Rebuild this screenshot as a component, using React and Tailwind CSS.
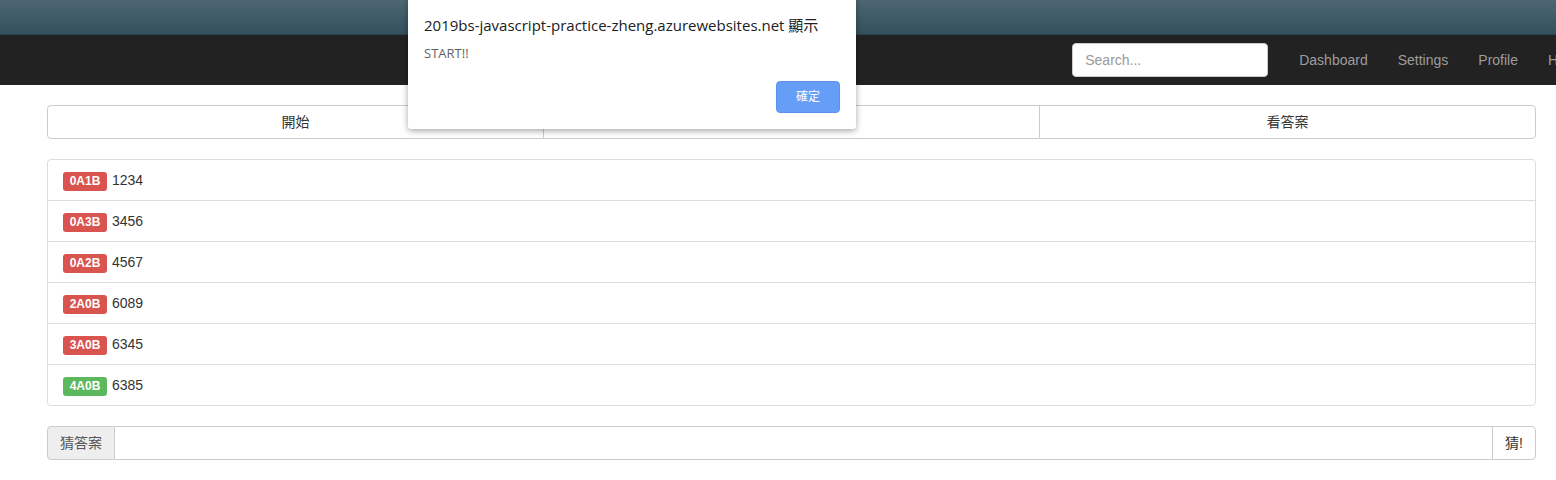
import React from "react";

const guesses = [
  { hint: "0A1B", value: "1234", ok: false },
  { hint: "0A3B", value: "3456", ok: false },
  { hint: "0A2B", value: "4567", ok: false },
  { hint: "2A0B", value: "6089", ok: false },
  { hint: "3A0B", value: "6345", ok: false },
  { hint: "4A0B", value: "6385", ok: true },
];

const sans = { fontFamily: '"Liberation Sans", Arial, "Noto Sans CJK TC", sans-serif' };

export default function App() {
  return (
    <div className="relative w-[1556px] h-[480px] bg-white overflow-hidden text-[14px] text-[#333]" style={sans}>
      {/* top strip */}
      <div className="h-[35px] bg-gradient-to-b from-[#4c6773] to-[#34505d] border-b border-[#2c4550]" />

      {/* navbar */}
      <nav className="h-[50px] bg-[#222] flex items-center justify-end">
        <input
          placeholder="Search..."
          className="w-[196px] h-[34px] rounded-[4px] bg-white border border-[#ccc] px-3 text-[14px] placeholder:text-[#999] outline-none"
        />
        <ul className="flex items-center ml-[16px] text-[#9d9d9d]">
          <li className="px-[15px]">Dashboard</li>
          <li className="px-[15px]">Settings</li>
          <li className="px-[15px]">Profile</li>
          <li className="pl-[15px] w-[23px] overflow-hidden">Help</li>
        </ul>
      </nav>

      <div className="ml-[47px] w-[1489px] pt-[20px]">
        {/* button group */}
        <div className="flex h-[34px]">
          <button className="flex-1 border border-[#ccc] rounded-l-[4px] bg-white">開始</button>
          <button className="flex-1 border border-[#ccc] -ml-px bg-white">猜答案</button>
          <button className="flex-1 border border-[#ccc] -ml-px rounded-r-[4px] bg-white">看答案</button>
        </div>

        {/* list group */}
        <ul className="mt-[20px] border border-[#ddd] rounded-[4px]">
          {guesses.map((g, i) => (
            <li
              key={g.hint}
              className={`h-[40px] flex items-center px-[15px] ${i > 0 ? "border-t border-[#ddd] h-[41px]" : ""}`}
            >
              <span
                className={`inline-flex items-center justify-center w-[44px] h-[19px] mt-[2px] rounded-[3px] text-white font-bold text-[12px] ${
                  g.ok ? "bg-[#5cb85c]" : "bg-[#d9534f]"
                }`}
              >
                {g.hint}
              </span>
              <span className="ml-[5px]">{g.value}</span>
            </li>
          ))}
        </ul>

        {/* input group */}
        <div className="mt-[20px] flex h-[34px]">
          <span className="w-[68px] flex items-center justify-center bg-[#eee] border border-[#ccc] rounded-l-[4px] text-[#555]">
            猜答案
          </span>
          <input className="flex-1 border-y border-[#ccc] outline-none px-3" />
          <button className="w-[44px] border border-[#ccc] rounded-r-[4px] bg-white">猜!</button>
        </div>
      </div>

      {/* alert dialog */}
      <div
        className="absolute left-[408px] top-[-4px] w-[448px] h-[133px] bg-white rounded-b-[3px] shadow-[0_2px_6px_rgba(0,0,0,0.35)]"
        style={{ fontFamily: '"Open Sans", "Noto Sans CJK TC", sans-serif' }}
      >
        <div className="absolute left-[16px] top-[18px] text-[15px] text-[#202124]">
          2019bs-javascript-practice-zheng.azurewebsites.net 顯示
        </div>
        <div className="absolute left-[16px] top-[48px] text-[13px] text-[#5f6368]">START!!</div>
        <button className="absolute left-[368px] top-[85px] w-[64px] h-[32px] rounded-[4px] bg-[#669df6] border border-[#5b92ec] text-white text-[12px]">
          確定
        </button>
      </div>
    </div>
  );
}
